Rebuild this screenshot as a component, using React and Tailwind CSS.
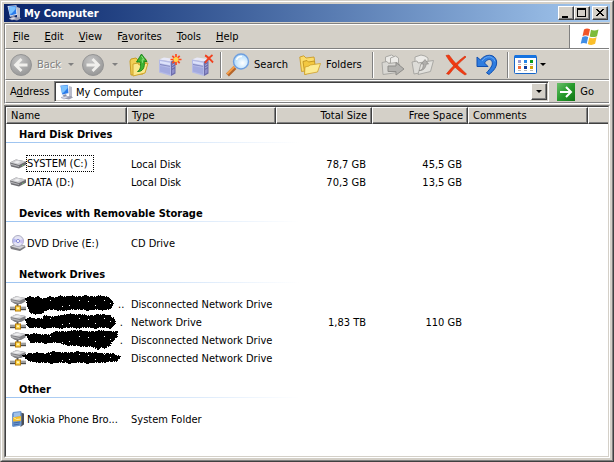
import React from 'react';

function ComputerIcon() {
  return (
    <svg viewBox="0 0 16 16" className="size-4 shrink-0" aria-hidden="true">
      <path d="M11 2l3 1v10l-3 2z" fill="#b9bccb" />
      <path d="M8 13l5-1 2 1.500-4 2-5-1z" fill="#9a9db0" />
      <path d="M1.500 1l9-.8.8 9.500-7.300 2z" fill="#e6ebf7" />
      <path d="M2.500 1.800l7.200-.7.700 7.800-6 1.600z" fill="#2a7bea" />
      <path d="M3 2l6.500-.6.200 2.600-4 4.500-2 .5z" fill="#7cc3ff" />
      <path d="M5 11l3-.8 1 2.500-3 1z" fill="#8a8fa8" />
      <path d="M3 13.500l5-1.500 3 1-5 2z" fill="#d9dcea" stroke="#8f93ad" strokeWidth=".5" />
    </svg>
  );
}

function RoundArrow({ flip }) {
  return (
    <svg viewBox="0 0 22 22" className="size-[22px]" aria-hidden="true">
      <defs>
        <radialGradient id={flip ? 'discF' : 'discB'} cx=".4" cy=".3" r=".8">
          <stop offset="0" stopColor="#c4c4c4" />
          <stop offset="1" stopColor="#929292" />
        </radialGradient>
      </defs>
      <circle cx="11" cy="11" r="10.500" fill={flip ? 'url(#discF)' : 'url(#discB)'} stroke="#949494" />
      <g transform={flip ? 'matrix(-1 0 0 1 22 0)' : undefined} fill="none" stroke="#f0efec" strokeWidth="2.800">
        <path d="M11.500 5L5.500 11l6 6M6 11H17.500" />
      </g>
    </svg>
  );
}

function Caret({ color = '#808080' }) {
  return (
    <svg viewBox="0 0 6 3" className="h-[3px] w-[6px] shrink-0" aria-hidden="true">
      <path d="M0 0h6L3 3z" fill={color} />
    </svg>
  );
}

function UpIcon() {
  return (
    <svg viewBox="0 0 20 24" className="h-6 w-5" aria-hidden="true">
      <path d="M1 8l1-2 5-1 2 2 8-1v4l-3 11-12 1z" fill="#f2cf55" stroke="#c99d22" />
      <path d="M4 11l5-1 1 2 9-2-3 10-12 3z" fill="#fbe88b" stroke="#cfa52c" />
      <path d="M8.500 18.500c3-1.500 3.500-5 2.700-9.500H7.500L12.500 1l5.500 7.500h-2.800c1 6-1.700 10.500-6.700 10z" fill="#3db534" stroke="#178017" strokeWidth=".9" />
      <path d="M12.500 3l2.500 3.800h-2l.7 3" fill="none" stroke="#8fe07c" />
    </svg>
  );
}

function ServerIcon({ mode }) {
  return (
    <svg viewBox="0 0 24 24" className="h-6 w-6" aria-hidden="true">
      <path d="M1 6.500L6 4.500l11 1.500-4 2.500z" fill="#e8e9f8" />
      <path d="M1 6.500l12 2V23L1 19.500z" fill="#b4bae6" />
      <path d="M2 8l10 1.800v2.400L2 10.300z" fill="#dde2fa" />
      <path d="M2 11l10 1.900v.8L2 11.900z" fill="#8288bf" />
      <path d="M2 13l10 2v6.300L2 18.600z" fill="#a3aadf" />
      <path d="M13 8.500L17.500 6v14.500L13 23z" fill="#6d6dab" />
      <path d="M14 10l2.500-1.500M14 12.500l2.500-1.500M14 15l2.500-1.500" stroke="#aaaada" />
      <path d="M14 17l2.500-1.500v4L14 21z" fill="#8f8fcb" />
      {mode === 'new' ? (
        <g>
          <path d="M18 1v11M12.500 6.500h11M14.300 2.800l7.400 7.400M21.700 2.800l-7.400 7.400" stroke="#ff4a1c" strokeWidth="1.700" />
          <circle cx="18" cy="6.500" r="2.500" fill="#ffd84a" />
        </g>
      ) : (
        <path d="M14 2.500c3 1 5 4 8 7M21.500 2c-3 2-5.500 5-7.500 8" stroke="#f0401e" strokeWidth="1.900" fill="none" />
      )}
    </svg>
  );
}

function SearchIcon() {
  return (
    <svg viewBox="0 0 24 24" className="h-6 w-6" aria-hidden="true">
      <defs>
        <radialGradient id="lens" cx=".6" cy=".6" r=".7">
          <stop offset="0" stopColor="#ffffff" />
          <stop offset="1" stopColor="#9fd4fb" />
        </radialGradient>
      </defs>
      <path d="M1.500 22L9 14.500" stroke="#b5652a" strokeWidth="4" />
      <path d="M1 21L8.500 13.500" stroke="#f4a04c" strokeWidth="2" />
      <circle cx="15" cy="8.500" r="7.500" fill="url(#lens)" stroke="#6f9fdf" strokeWidth="1.400" />
      <path d="M10.500 7c.8-2.500 3-3.800 5.500-3.500" stroke="#fff" strokeWidth="1.500" fill="none" />
    </svg>
  );
}

function FoldersIcon() {
  return (
    <svg viewBox="0 0 22 20" className="h-5 w-[22px]" aria-hidden="true">
      <path d="M.8 2l4-1.200L7 3l8-1 .5 3L12 15l-9.500 1.500z" fill="#fbdc6b" stroke="#c99a27" strokeWidth=".9" />
      <path d="M4 6.500l4-1 1.500 1.500 6-1 .5 4-2 6-8 3.500z" fill="#f3c840" stroke="#c0921f" strokeWidth=".9" />
      <path d="M6 12l4-1 1-1 10.500-1.500-3 8.500L5.500 19.500z" fill="#fdeb92" stroke="#cfa02a" strokeWidth=".8" />
    </svg>
  );
}

function MoveToIcon() {
  return (
    <svg viewBox="0 0 24 22" className="h-[22px] w-6" aria-hidden="true">
      <path d="M4.500 9V3l6-2 2 1v5" fill="#ecebe8" stroke="#a9a8a4" />
      <path d="M9.500 9V4l5-2 3 2v7" fill="#ecebe8" stroke="#a9a8a4" />
      <path d="M1 8.500l5-1 1.500 2 8-1 3 1.500-2 8.500L2 20.500z" fill="#d9d8d4" stroke="#a9a8a4" />
      <path d="M7 12h8V8.500l8 6.500-8 6v-3.500H7z" fill="#b3b2af" stroke="#8e8d8a" />
    </svg>
  );
}

function CopyToIcon() {
  return (
    <svg viewBox="0 0 24 22" className="h-[22px] w-6" aria-hidden="true">
      <path d="M4 10V3l6-2 4 1 3 2v4" fill="#ecebe8" stroke="#a9a8a4" />
      <path d="M1 8l5-1 1 2 6-1v10L3 20z" fill="#dddcd8" stroke="#a9a8a4" />
      <path d="M10 9.500l4-1 1.500-1 7-1-3 11L7 20.500z" fill="#e2e1dd" stroke="#a9a8a4" />
      <path d="M8 16.500c3.500 0 4-3 4.500-6.500h-2.200L14 5.500l3.500 4.500h-2.200c-.8 4-2.800 6.800-7.300 6.500z" fill="#b0afac" stroke="#8e8d8a" strokeWidth=".7" />
    </svg>
  );
}

function DeleteIcon() {
  return (
    <svg viewBox="0 0 22 22" className="size-[22px]" aria-hidden="true">
      <path d="M1 1.500l3-.5c5 7 10 12 17.500 19l-1.500 1C12 16 6 10 1 1.500z" fill="#f23a12" stroke="#d02b06" strokeWidth=".6" />
      <path d="M20 2l1 1C14 9 9 14 4 20.500l-2.500-.8C7 13 13 7 20 2z" fill="#f23a12" stroke="#d02b06" strokeWidth=".6" />
    </svg>
  );
}

function UndoIcon() {
  return (
    <svg viewBox="0 0 22 22" className="size-[22px]" aria-hidden="true">
      <path d="M1 3l3.500 3C9-.5 19-.5 20.500 7c1 5.500-3 10-7.500 13.500l-2.500-1.700C14 15 17.500 11 16 7.500 14.500 4 10.500 5.500 8.500 9l3.500 3.500H1z" fill="#2f7de0" stroke="#124fae" strokeLinejoin="round" />
      <path d="M6 7c4-6 11-5.500 13 .5" fill="none" stroke="#6aaaf4" />
    </svg>
  );
}

function ViewsIcon() {
  return (
    <svg viewBox="0 0 23 19" className="h-[19px] w-[23px]" aria-hidden="true">
      <rect x=".5" y=".5" width="22" height="18" rx="1" fill="#fff" stroke="#1565c8" />
      <path d="M1 0h21v3H0z" fill="#1673e0" />
      <g>
        <path d="M4 5h3v3H4z" fill="#9a9ad0" />
        <path d="M10 5h3v3h-3z" fill="#2585e8" />
        <path d="M16 5h3v3h-3z" fill="#0a9a1c" />
        <path d="M4 11h3v3H4z" fill="#f26b3c" />
        <path d="M10 11h3v3h-3z" fill="#0d3a9c" />
        <path d="M16 11h3v3h-3z" fill="#d6a40c" />
        <path d="M4 9.500h3M10 9.500h3M16 9.500h3M4 15.500h3M10 15.500h3M16 15.500h3" stroke="#b5b5b5" />
      </g>
    </svg>
  );
}

function FlagLogo() {
  return (
    <svg viewBox="0 0 20 18" className="h-[18px] w-5" role="img" aria-label="Windows">
      <path d="M4 1.500C6 .2 8 .3 10 1.300L8.500 8C6.500 7 4.500 7 2.500 8.200z" fill="#f0562a" />
      <path d="M11 1.700c2 1 4.500 1 7.500-.2L17 8.200c-2.500 1.100-5 1.200-7.300.2z" fill="#7cbb3a" />
      <path d="M2.200 9.300c2-1.200 4-1.200 6-.2l-1.500 6.600c-2-1-4-1-6 .1z" fill="#3f8de6" />
      <path d="M9.300 9.500c2.200 1 4.800.9 7.300-.2l-1.500 6.500c-2.500 1.400-5 1.400-7.300.2z" fill="#fbbf2b" />
    </svg>
  );
}

function GoIcon() {
  return (
    <svg viewBox="0 0 18 18" className="size-[18px]" aria-hidden="true">
      <defs>
        <linearGradient id="go" x1="0" y1="0" x2="1" y2="1">
          <stop offset="0" stopColor="#6cc06a" />
          <stop offset=".5" stopColor="#279a2c" />
          <stop offset="1" stopColor="#107516" />
        </linearGradient>
      </defs>
      <rect width="18" height="18" fill="url(#go)" />
      <path d="M3 9h11M9 4l5 5-5 5" fill="none" stroke="#fff" strokeWidth="2" />
    </svg>
  );
}

function DriveIcon({ kind }) {
  return (
    <svg viewBox="0 0 16 16" className="size-4 shrink-0" aria-hidden="true">
      {kind === 'disk' && (
        <g>
          <path d="M0 6.500L6 3.500l10 2v3.300L9 12.500 1 10.500z" fill="#6c6c70" />
          <path d="M0 6.500L6 3.500l10 2L9 9z" fill="#cdcdd0" />
          <path d="M3.500 6.300l3.500-1.500 4 1-3.500 1.700z" fill="#efeff1" />
          <path d="M.5 7.500L9 10v1L1 9z" fill="#b4b4b8" />
          <path d="M12 9.800l1.500-.8" stroke="#6fbf6f" />
        </g>
      )}
      {kind === 'cd' && (
        <g>
          <path d="M0 11.500l5-2.500 10 1.500.5 2L10 16l-9-2z" fill="#7d7d82" />
          <path d="M1 11.500l5-2 9 1.500-5 3z" fill="#cfcfd3" />
          <circle cx="8" cy="6" r="5.500" fill="#e4e4f4" stroke="#9c9cb4" strokeWidth=".8" />
          <path d="M8 6l-4.500-3A5.300 5.300 0 0 0 3 8z" fill="#b7b9ee" />
          <path d="M8 6l4.500 3A5.300 5.300 0 0 0 13 4z" fill="#c9c0f0" />
          <circle cx="8" cy="6" r="1.600" fill="#fff" stroke="#6e74cf" strokeWidth=".8" />
        </g>
      )}
      {kind === 'net' && (
        <g>
          <path d="M.5 3L6 .3 15.500 2v3.500L11 8 5 8 1 5.500z" fill="#808084" />
          <path d="M.5 3L6 .3 15.500 2 9.500 4.800z" fill="#d4d4d7" />
          <path d="M3 3l4-1.800 4 1-4 1.300z" fill="#f0f0f1" />
          <path d="M1 4l8.500 2v1L2 5.500z" fill="#b9b9bc" />
          <path d="M7.500 8v2.500" stroke="#555" strokeWidth="2" />
          <path d="M0 12.500h16" stroke="#4c4c4c" strokeWidth="3.400" />
          <path d="M0 12h16" stroke="#d9d9d9" strokeWidth="1.200" />
          <rect x="5.500" y="10" width="5" height="5" fill="#ffd84d" stroke="#b57a08" />
          <path d="M7 11.500h2v1.500H7z" fill="#fff4c0" />
        </g>
      )}
      {kind === 'phone' && (
        <g>
          <path d="M10.500 1.500l3.500 1v11L10.500 16z" fill="#4b4e55" />
          <path d="M3 1l8-1 .5 1v13.500L3 16l-1-1V3z" fill="#6f98cf" />
          <path d="M4 2l6-.8v4L4 6z" fill="#9fc0e8" />
          <path d="M3 6.500L11 5v5l-8 .5z" fill="#f5bd28" />
          <path d="M3.500 6.500l3 2 4-.5" stroke="#fff1a8" fill="none" />
          <path d="M3.500 12l6.500-1M3.500 14l6-1" stroke="#3e68a8" />
        </g>
      )}
    </svg>
  );
}

const SCRIBBLES = [
  'M0 4L4 2l4 1 4-1 5 2 7-2 5 1 5-2 6 1 6-1 6 1 7-1 8 1 7-1 6 1 3 1 3 3 1 3-1 3-3 2-7 1-7-1-7 1-8-1-7 0-8 1-7 0-6-1-6 1-4 3-6 1-5-1-3-5z',
  'M0 7L4 5l6 1 6 0 3-3 7 1 8-1 10-2 8 1 6 0 6 1 7-1 8 0 5 1 3 2 2 3 0 3-4 4-8-1-8 1-9-1-8 1-9-1-8 1-8-1-8 1-8-1-7 1-3-3z',
  'M0 4L9 3l8 1 7 0 4-3 9 0 9-1 8 0 10 1 10-1 17 1 0 5-4 3-3 5-5 3-3-1-4 2-4-2-6-1-7 0-7-1-7 0-6-2-6-1-9 1-8-1-7 1z',
  'M-3 7l6-2 9-1 7 1 8-2 9 1 8 0 8-1 8 1 9 0 9 1 9 0 5 2 2 1-3 4-6 0-6 1-9 0-8 1-9-1-9 1-9-1-9 1-8-1-6 0-8-1z',
];

function Scribble({ index }) {
  return (
    <svg
      viewBox="0 0 100 22"
      className="-my-[2px] -mr-1 -ml-1 h-[22px] w-[100px] shrink-0"
      shapeRendering="crispEdges"
      role="img"
      aria-label="Redacted name"
    >
      <g transform="translate(4 2)">
        <path d={SCRIBBLES[index]} fill="#000" stroke="#000" strokeDasharray="3 1 1 1" strokeWidth="1.400" />
        <path d="M24 5h1M36 11h1M53 5h1M62 6h1M69 10h1M78 5h1M84 8h1M43 10h1" stroke="#fff" />
      </g>
    </svg>
  );
}

const GROUPS = [
  {
    title: 'Hard Disk Drives',
    rows: [
      { icon: 'disk', name: 'SYSTEM (C:)', type: 'Local Disk', total: '78,7 GB', free: '45,5 GB', focused: true },
      { icon: 'disk', name: 'DATA (D:)', type: 'Local Disk', total: '70,3 GB', free: '13,5 GB' },
    ],
  },
  {
    title: 'Devices with Removable Storage',
    rows: [{ icon: 'cd', name: 'DVD Drive (E:)', type: 'CD Drive' }],
  },
  {
    title: 'Network Drives',
    rows: [
      { icon: 'net', scribble: 0, name: '..', type: 'Disconnected Network Drive' },
      { icon: 'net', scribble: 1, name: '.', type: 'Network Drive', total: '1,83 TB', free: '110 GB' },
      { icon: 'net', scribble: 2, name: '.', type: 'Disconnected Network Drive' },
      { icon: 'net', scribble: 3, name: '', type: 'Disconnected Network Drive' },
    ],
  },
  {
    title: 'Other',
    rows: [{ icon: 'phone', name: 'Nokia Phone Bro...', type: 'System Folder' }],
  },
];

const MENUS = [
  ['', 'F', 'ile'],
  ['', 'E', 'dit'],
  ['', 'V', 'iew'],
  ['F', 'a', 'vorites'],
  ['', 'T', 'ools'],
  ['', 'H', 'elp'],
];

function Separator() {
  return <span className="h-[26px] w-[2px] shrink-0 border-r border-l border-r-white border-l-[#808080]" />;
}

function CaptionButton({ label, children }) {
  return (
    <button
      type="button"
      aria-label={label}
      className="h-[14px] w-4 border border-t-white border-r-[#404040] border-b-[#404040] border-l-white bg-[#d4d0c8] shadow-[inset_-1px_-1px_#808080]"
    >
      <svg viewBox="0 0 14 12" className="h-3 w-[14px]" shapeRendering="crispEdges" aria-hidden="true">
        {children}
      </svg>
    </button>
  );
}

function HeaderCell({ children, right }) {
  return (
    <th
      scope="col"
      className={
        'h-[17px] border-t border-r border-b border-l border-t-white border-r-[#404040] border-b-[#404040] border-l-white bg-[#d4d0c8] px-1 pt-px pb-0 font-normal shadow-[inset_-1px_-1px_#808080] ' +
        (right ? 'text-right' : 'text-left')
      }
    >
      {children}
    </th>
  );
}

function nameClass(row) {
  if (row.focused) return 'h-[17px] w-[68px] self-start border border-dotted border-black pt-px';
  if (row.scribble !== undefined) return 'ml-auto pt-[2px] pr-1';
  return 'px-px pt-[2px]';
}

function Row({ row }) {
  return (
    <tr className="h-[18px]">
      <td className="p-0 pl-1">
        <div className="flex h-[18px] items-center whitespace-nowrap">
          <DriveIcon kind={row.icon} />
          {row.scribble !== undefined && <Scribble index={row.scribble} />}
          <span className={nameClass(row)}>{row.name}</span>
        </div>
      </td>
      <td className="p-0 pt-[2px] pl-1 whitespace-nowrap">{row.type}</td>
      <td className="p-0 pt-[2px] pr-[6px] text-right">{row.total}</td>
      <td className="p-0 pt-[2px] pr-[6px] text-right">{row.free}</td>
      <td className="p-0" />
      <td className="p-0" />
    </tr>
  );
}

function FileList() {
  return (
    <table className="w-full table-fixed border-separate border-spacing-0">
      <colgroup>
        <col className="w-[121px]" />
        <col className="w-[149px]" />
        <col className="w-[96px]" />
        <col className="w-[96px]" />
        <col className="w-[120px]" />
        <col />
      </colgroup>
      <thead>
        <tr>
          <HeaderCell>Name</HeaderCell>
          <HeaderCell>Type</HeaderCell>
          <HeaderCell right>Total Size</HeaderCell>
          <HeaderCell right>Free Space</HeaderCell>
          <HeaderCell>Comments</HeaderCell>
          <td className="border-t border-b border-l border-t-white border-b-[#404040] border-l-white bg-[#d4d0c8] p-0 shadow-[inset_0_-1px_#808080]" />
        </tr>
      </thead>
      {GROUPS.map((group) => (
        <tbody key={group.title}>
          <tr>
            <th scope="rowgroup" colSpan={6} className="p-0 pb-3 text-left font-bold">
              <div className="flex h-[18px] items-end pl-[13px]">{group.title}</div>
              <div className="h-px w-[294px] bg-linear-to-r from-[#9cc3f0] to-white" />
            </th>
          </tr>
          {group.rows.map((row, i) => (
            <Row key={i} row={row} />
          ))}
          <tr>
            <td colSpan={6} className="h-3 p-0" />
          </tr>
        </tbody>
      ))}
    </table>
  );
}

export default function App() {
  return (
    <div className="h-screen w-full border border-t-[#d4d0c8] border-r-[#404040] border-b-[#404040] border-l-[#d4d0c8] font-['DejaVu_Sans_Condensed','Noto_Sans',sans-serif] text-[11px] leading-[14px] text-black">
      <div className="flex h-full flex-col border border-t-white border-r-[#808080] border-b-[#808080] border-l-white bg-[#d4d0c8] p-[2px]">
        <header className="mb-px flex h-[18px] shrink-0 items-center bg-linear-to-r from-[#0a246a] to-[#a6caf0] pr-[2px] pl-[2px]">
          <ComputerIcon />
          <h1 className="ml-[2px] flex-1 pt-px text-[11px] font-bold text-white">My Computer</h1>
          <CaptionButton label="Minimize">
            <path d="M3 9h6v2H3z" />
          </CaptionButton>
          <CaptionButton label="Maximize">
            <path d="M2 1h9v9H2zM3 3v6h7V3z" fillRule="evenodd" />
          </CaptionButton>
          <span className="w-[2px]" />
          <CaptionButton label="Close">
            <path d="M3 2h2v1h1v1h2V3h1V2h2v1h-1v1H9v1H8v1h1v1h1v1h1v1H9V8H8V7H6v1H5v1H3V8h1V7h1V6h1V5H5V4H4V3H3z" />
          </CaptionButton>
        </header>

        <div className="shrink-0 border border-t-[#808080] border-r-white border-b-white border-l-[#808080]">
          <div className="flex h-[25px] border-t border-b border-l border-t-white border-b-[#808080] border-l-white">
            <nav className="flex flex-1 items-center gap-[15px] pl-[7px]">
              {MENUS.map(([before, key, after]) => (
                <button key={key} type="button">
                  {before}
                  <u>{key}</u>
                  {after}
                </button>
              ))}
            </nav>
            <div className="flex w-10 items-center justify-center border-l border-l-[#808080] bg-white">
              <FlagLogo />
            </div>
          </div>

          <div className="flex h-[31px] items-center border-t border-b border-l border-t-white border-b-[#808080] border-l-white pl-1">
            <button type="button" className="flex w-[58px] items-center gap-[5px] text-[#808080]">
              <RoundArrow />
              <span className="[text-shadow:1px_1px_#fff]">Back</span>
            </button>
            <span className="flex w-[14px]">
              <Caret />
            </span>
            <button type="button" aria-label="Forward" className="flex w-[30px]">
              <RoundArrow flip />
            </button>
            <span className="flex w-[17px]">
              <Caret />
            </span>
            <button type="button" aria-label="Up" className="flex w-[29px]">
              <UpIcon />
            </button>
            <button type="button" aria-label="Map network drive" className="flex w-[33px]">
              <ServerIcon mode="new" />
            </button>
            <button type="button" aria-label="Disconnect network drive" className="flex w-[29px]">
              <ServerIcon mode="remove" />
            </button>
            <Separator />
            <button type="button" className="ml-1 flex w-[73px] items-center gap-1">
              <SearchIcon />
              Search
            </button>
            <button type="button" className="flex w-[73px] items-center gap-[5px]">
              <FoldersIcon />
              Folders
            </button>
            <Separator />
            <button type="button" aria-label="Move to" className="ml-[7px] flex w-[30px]">
              <MoveToIcon />
            </button>
            <button type="button" aria-label="Copy to" className="flex w-[34px]">
              <CopyToIcon />
            </button>
            <button type="button" aria-label="Delete" className="flex w-[31px]">
              <DeleteIcon />
            </button>
            <button type="button" aria-label="Undo" className="flex w-[31px]">
              <UndoIcon />
            </button>
            <Separator />
            <button type="button" aria-label="Views" className="ml-[5px] flex items-center gap-[3px]">
              <ViewsIcon />
              <Caret color="#000" />
            </button>
          </div>

          <div className="flex h-[23px] items-center border-t border-b border-l border-t-white border-b-[#808080] border-l-white pr-[15px] pl-1">
            <label htmlFor="address" className="w-11 pt-px">
              A<u>d</u>dress
            </label>
            <div className="flex h-[21px] flex-1 items-center border border-t-[#808080] border-r-white border-b-white border-l-[#808080] bg-white pl-[3px] shadow-[inset_1px_1px_#404040,inset_-1px_-1px_#d4d0c8]">
              <ComputerIcon />
              <select id="address" className="ml-[2px] min-w-0 flex-1 appearance-none bg-transparent pt-[2px] outline-none">
                <option>My Computer</option>
              </select>
              <span className="mr-px flex h-[17px] w-4 items-center justify-center border border-t-white border-r-[#404040] border-b-[#404040] border-l-white bg-[#d4d0c8] shadow-[inset_-1px_-1px_#808080]">
                <Caret color="#000" />
              </span>
            </div>
            <button type="button" className="ml-2 flex items-center gap-[5px]">
              <GoIcon />
              <span className="pt-px">Go</span>
            </button>
          </div>
        </div>

        <main className="mt-px min-h-0 flex-1 border border-t-[#808080] border-r-white border-b-white border-l-[#808080]">
          <div className="h-full overflow-hidden border border-t-[#404040] border-r-[#d4d0c8] border-b-[#d4d0c8] border-l-[#404040] bg-white">
            <FileList />
          </div>
        </main>
      </div>
    </div>
  );
}
